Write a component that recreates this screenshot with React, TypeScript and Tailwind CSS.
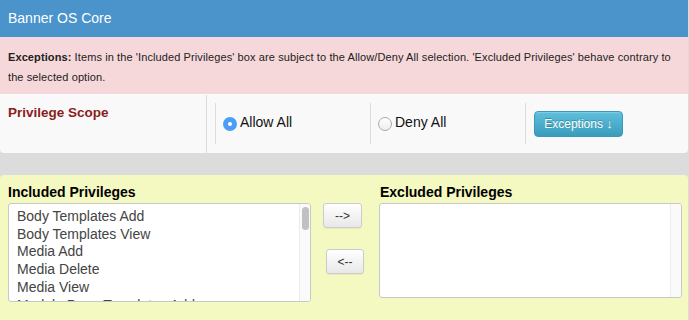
import React from "react";

const items = [
  "Body Templates Add",
  "Body Templates View",
  "Media Add",
  "Media Delete",
  "Media View",
  "Module Page Templates Add",
];

export default function App() {
  return (
    <div className="w-[689px] h-[320px] overflow-hidden bg-[#dcdcdc] font-['Liberation_Sans',Arial,sans-serif]">
      <div className="w-[688px]">
        <div className="h-[37px] bg-[#4a93cb] text-white text-[14px] px-2 flex items-center">
          Banner OS Core
        </div>
        <div className="bg-[#f6d8da] text-[#222] text-[11px] leading-[20px] tracking-[0.1px] pl-2 pr-3 pt-[10px] pb-[7px]">
          <span className="font-bold">Exceptions:</span> Items in the 'Included Privileges' box are subject to the Allow/Deny All selection. 'Excluded Privileges' behave contrary to the selected option.
        </div>
        <div className="h-[59px] bg-[#f9f9f9] rounded-b-[4px] flex border-t border-[#fbfbfb]">
          <div className="w-[207px] border-r border-[#dddddd] pl-2 pt-[10px]">
            <div className="text-[13.5px] leading-[16px] font-bold text-[#8b1c1c]">Privilege Scope</div>
          </div>
          <div className="flex pl-2 py-[8px]">
            <div className="w-[155px] h-[41px] border-l border-[#dddddd] pl-[7px] flex items-center">
              <span className="w-[14px] h-[14px] rounded-full bg-[#4c9ef5] flex items-center justify-center">
                <span className="w-[4px] h-[4px] rounded-full bg-white" />
              </span>
              <span className="ml-[3px] text-[14px] text-[#111] -mt-[3px]">Allow All</span>
            </div>
            <div className="w-[155px] h-[41px] border-l border-[#dddddd] pl-[7px] flex items-center">
              <span className="w-[14px] h-[14px] rounded-full border border-[#a9a9a9] bg-gradient-to-b from-white to-[#eeeeee]" />
              <span className="ml-[3px] text-[14px] text-[#111] -mt-[3px]">Deny All</span>
            </div>
            <div className="h-[41px] border-l border-[#dddddd] pl-[8px] flex items-center">
              <button className="w-[89px] h-[26px] rounded-[4px] border border-[#3a9abb] bg-gradient-to-b from-[#5ec0dd] to-[#3a9cbc] text-white text-[12px] [text-shadow:0_-1px_0_rgba(0,0,0,0.25)] shadow-[inset_0_1px_0_rgba(255,255,255,0.2)]">
                Exceptions <span className="text-[13px]">↓</span>
              </button>
            </div>
          </div>
        </div>
        <div className="h-[22px]" />
        <div className="h-[145px] bg-[#f4f8c1] rounded-t-[4px] flex">
          <div className="pl-2 pt-[9px]">
            <div className="text-[14px] leading-[17px] font-bold text-black">Included Privileges</div>
            <div className="mt-[2px] w-[303px] h-[99px] bg-white border border-[#c8c8c8] rounded-[3px] flex overflow-hidden">
              <div className="flex-1 pl-2 pt-[4px] overflow-hidden">
                {items.map((t) => (
                  <div key={t} className="text-[14px] leading-[17.7px] text-[#444] whitespace-nowrap">
                    {t}
                  </div>
                ))}
              </div>
              <div className="w-[11px] border-l border-[#ececec] bg-[#fafafa] pt-[3px] flex justify-center">
                <div className="w-[7px] h-[23px] rounded-full bg-[#c1c1c1]" />
              </div>
            </div>
          </div>
          <div className="w-[68px] flex flex-col pt-[28px]">
            <button className="ml-[12px] w-[39px] h-[25px] rounded-[3px] border border-[#cccccc] bg-gradient-to-b from-white to-[#e8e8e8] text-[12px] text-[#333] shadow-[0_1px_1px_rgba(0,0,0,0.05)]">
              --&gt;
            </button>
            <button className="ml-[15px] mt-[21px] w-[38px] h-[25px] rounded-[3px] border border-[#cccccc] bg-gradient-to-b from-white to-[#e8e8e8] text-[12px] text-[#333] shadow-[0_1px_1px_rgba(0,0,0,0.05)]">
              &lt;--
            </button>
          </div>
          <div className="pt-[9px]">
            <div className="pl-[1px] text-[14px] leading-[17px] font-bold text-black">Excluded Privileges</div>
            <div className="mt-[2px] w-[303px] h-[95px] bg-white border border-[#c8c8c8] rounded-[3px] flex overflow-hidden">
              <div className="flex-1" />
              <div className="w-[11px] border-l border-[#ececec] bg-[#fafafa]" />
            </div>
          </div>
        </div>
      </div>
    </div>
  );
}
